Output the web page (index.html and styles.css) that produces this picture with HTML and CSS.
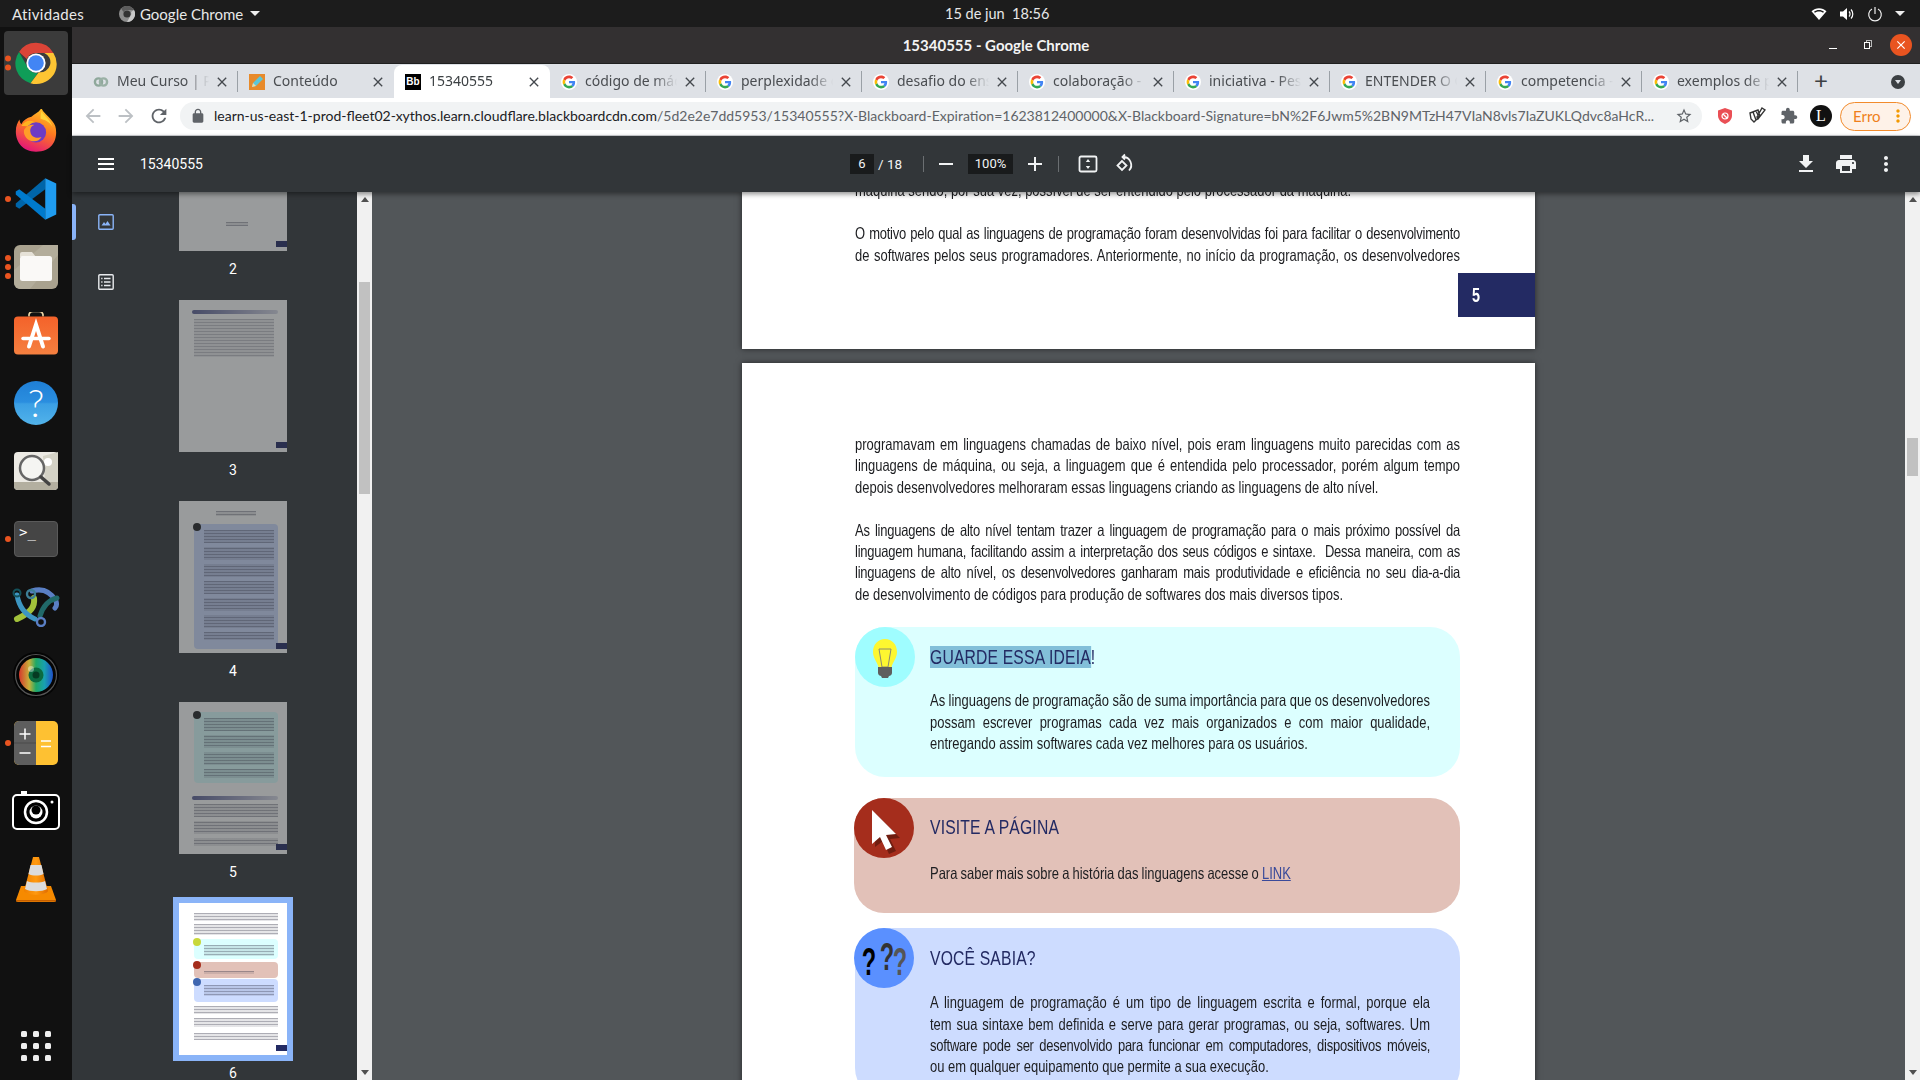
FILE: index.html
```html
<!DOCTYPE html>
<html lang="pt-BR">
<head>
<meta charset="utf-8">
<title>15340555 - Google Chrome</title>
<link rel="stylesheet" href="styles.css">
</head>
<body>
<svg class="defs" aria-hidden="true">
  <symbol id="g" viewBox="-6 -6 60 60"><circle cx="24" cy="24" r="30" fill="#fff"/><path fill="#EA4335" d="M24 9.5c3.54 0 6.71 1.22 9.21 3.6l6.85-6.85C35.9 2.38 30.47 0 24 0 14.62 0 6.51 5.38 2.56 13.22l7.98 6.19C12.43 13.72 17.74 9.5 24 9.5z"/><path fill="#4285F4" d="M46.98 24.55c0-1.57-.15-3.09-.38-4.55H24v9.02h12.94c-.58 2.96-2.26 5.48-4.78 7.18l7.73 6c4.51-4.18 7.09-10.36 7.09-17.65z"/><path fill="#FBBC05" d="M10.53 28.59c-.48-1.45-.76-2.99-.76-4.59s.27-3.14.76-4.59l-7.98-6.19C.92 16.46 0 20.12 0 24c0 3.88.92 7.54 2.56 10.78l7.97-6.19z"/><path fill="#34A853" d="M24 48c6.48 0 11.93-2.13 15.89-5.81l-7.73-6c-2.15 1.45-4.92 2.3-8.16 2.3-6.26 0-11.57-4.22-13.47-9.91l-7.98 6.19C6.51 42.62 14.62 48 24 48z"/></symbol>
  <symbol id="x" viewBox="0 0 24 24"><path fill="currentColor" d="M19 6.41L17.59 5 12 10.59 6.41 5 5 6.41 10.59 12 5 17.59 6.41 19 12 13.41 17.59 19 19 17.59 13.41 12z"/></symbol>
  <symbol id="back" viewBox="0 0 24 24"><path fill="currentColor" d="M20 11H7.83l5.59-5.59L12 4l-8 8 8 8 1.41-1.41L7.83 13H20v-2z"/></symbol>
  <symbol id="fwd" viewBox="0 0 24 24"><path fill="currentColor" d="M12 4l-1.41 1.41L16.17 11H4v2h12.17l-5.58 5.59L12 20l8-8z"/></symbol>
  <symbol id="reload" viewBox="0 0 24 24"><path fill="currentColor" d="M17.65 6.35C16.2 4.9 14.21 4 12 4c-4.42 0-7.99 3.58-7.99 8s3.57 8 7.99 8c3.73 0 6.84-2.55 7.73-6h-2.08c-.82 2.33-3.04 4-5.65 4-3.31 0-6-2.69-6-6s2.69-6 6-6c1.66 0 3.14.69 4.22 1.78L13 11h7V4l-2.35 2.35z"/></symbol>
  <symbol id="vdots" viewBox="0 0 24 24"><path fill="currentColor" d="M12 8c1.1 0 2-.9 2-2s-.9-2-2-2-2 .9-2 2 .9 2 2 2zm0 2c-1.1 0-2 .9-2 2s.9 2 2 2 2-.9 2-2-.9-2-2-2zm0 6c-1.1 0-2 .9-2 2s.9 2 2 2 2-.9 2-2-.9-2-2-2z"/></symbol>
</svg>

<header class="topbar">
  <div class="top-left">
    <span class="top-act">Atividades</span>
    <svg class="top-chrome" viewBox="0 0 16 16"><circle cx="8" cy="8" r="8" fill="#8d8d8d"/><circle cx="8" cy="8" r="3.6" fill="#333"/><path d="M8 0a8 8 0 0 1 7 4H8a4 4 0 0 0-3.5 2L2 2.5A8 8 0 0 1 8 0z" fill="#5c5c5c"/><path d="M15 4a8 8 0 0 1-7 12l3.4-6A4 4 0 0 0 12 6z" fill="#c9c9c9"/></svg>
    <span class="top-app">Google Chrome</span>
    <span class="caret"></span>
  </div>
  <div class="top-clock">15 de jun&nbsp; 18:56</div>
  <div class="top-right">
    <svg class="ti" viewBox="0 0 16 16"><path fill="#fff" d="M8 14 .5 5.2C2.6 3.3 5.2 2.2 8 2.2s5.4 1.1 7.5 3z"/><path fill="#1c1c1c" d="M3 5.7C4.4 4.7 6.1 4.1 8 4.1s3.6.6 5 1.6l-.9 1C10.900 5.900 9.500 5.400 8 5.400s-2.900.5-4.100 1.300z"/></svg>
    <svg class="ti" viewBox="0 0 16 16"><path fill="#fff" d="M1 5.500h3L8 2v12l-4-3.500H1z"/><path fill="none" stroke="#fff" stroke-width="1.200" d="M10 5.500a3.500 3.500 0 0 1 0 5M12 3.500a6.500 6.500 0 0 1 0 9"/></svg>
    <svg class="ti" viewBox="0 0 16 16"><path fill="none" stroke="#eee" stroke-width="1.200" d="M5 3a6.300 6.300 0 1 0 6 0M8 1v7"/></svg>
    <span class="caret"></span>
  </div>
</header>

<div class="desk">
  <aside class="dock">
    <div class="dock-item active">
      <span class="pips"><i></i><i></i></span>
      <svg class="di44" viewBox="0 0 48 48"><path fill="#db4437" d="M24 2a22 22 0 0 1 19 11H24a11 11 0 0 0-10 6.500L5.500 12A22 22 0 0 1 24 2z"/><path fill="#0f9d58" d="M5.500 12 15 29a11 11 0 0 0 11 5.800L18 46A22 22 0 0 1 5.500 12z"/><path fill="#fdc533" d="M43 13a22 22 0 0 1-25 33l9-12a11 11 0 0 0 6-21z"/><circle cx="24" cy="24" r="10.500" fill="#fff"/><circle cx="24" cy="24" r="8.500" fill="#4285f4"/></svg>
    </div>
    <div class="dock-item">
      <svg class="di44" viewBox="0 1.500 48 48"><defs><linearGradient id="ff" x1="0.700" y1="0" x2="0.300" y2="1"><stop offset="0" stop-color="#ffc928"/><stop offset=".45" stop-color="#ff7a1f"/><stop offset="1" stop-color="#e3127b"/></linearGradient></defs><path fill="url(#ff)" d="M30 0c1 6 12 12 15 20 3 10 0 28-21 28C10 48 2 38 2 26c0-6 2-10 4-13 0 2 1 4 2 5 2-4 6-7 11-8 3-3 9-5 11-10z"/><path fill="#ffb21f" d="M8 20c3-5 9-7 13-5 7 3 10 9 7 13-6-6-12-8-20-8z"/><circle cx="24" cy="27" r="11" fill="#6e3bc4"/><path fill="#ff9d28" d="M11 24c3-4 7-6 11-5-3 1-5 4-4 8 1 5 7 7 12 5-2 4-7 6-12 4-5-2-8-7-7-12z"/><path fill="#ffd43b" d="M30 4c3 5 10 10 12 17-3-6-9-8-13-9 0-3 0-5 1-8z"/></svg>
    </div>
    <div class="dock-item">
      <span class="pips"><i></i></span>
      <svg class="di44" viewBox="0 0 100 100"><polygon fill="#0065a9" points="71,3 71,28 12,72 4,67 4,60"/><polygon fill="#007acc" points="4,33 12,28 71,72 71,97 4,40"/><polygon fill="#1f9cf0" points="71,3 96,15 96,85 71,97"/></svg>
    </div>
    <div class="dock-item">
      <span class="pips"><i></i><i></i><i></i></span>
      <svg class="di46" viewBox="0 0 46 46"><rect x="1" y="1" width="44" height="44" rx="6" fill="#a9a28f"/><path d="M1 26 30 1h15v10L17 45H8a7 7 0 0 1-7-7z" fill="#b3ad9b"/><path fill="#e6e2d8" d="M7 10a2 2 0 0 1 2-2h10l4 5H7z"/><rect x="7" y="12" width="32" height="25" rx="2.500" fill="#faf9f7"/></svg>
    </div>
    <div class="dock-item">
      <svg class="di46" viewBox="0 1.500 46 46"><path d="M16 6V4a4 4 0 0 1 4-3h6a4 4 0 0 1 4 3v2" fill="none" stroke="#f1d9a8" stroke-width="1.600"/><defs><linearGradient id="sw" x1="0" y1="0" x2="0" y2="1"><stop offset="0" stop-color="#f4622a"/><stop offset="1" stop-color="#f58040"/></linearGradient></defs><rect x="1" y="6" width="44" height="38" rx="4" fill="url(#sw)"/><g stroke="#fff" stroke-linecap="round" fill="none"><path stroke-width="4" d="M16 36 23 14 30 36"/><path stroke-width="3.500" d="M10 28H36"/></g></svg>
    </div>
    <div class="dock-item">
      <svg class="di46" viewBox="0 0 46 46"><defs><linearGradient id="hp" x1="0" y1="0" x2="0" y2="1"><stop offset="0" stop-color="#1f7fd6"/><stop offset=".48" stop-color="#2a8edf"/><stop offset=".52" stop-color="#3b9fe4"/><stop offset="1" stop-color="#52b3ea"/></linearGradient></defs><circle cx="23" cy="23" r="22" fill="url(#hp)"/><text x="23" y="37" class="help-q">?</text></svg>
    </div>
    <div class="dock-item">
      <svg class="di46" viewBox="0 0 46 46"><rect x="1" y="4" width="44" height="38" rx="4" fill="#eceae4"/><path d="M1 34h44v4a4 4 0 0 1-4 4H5a4 4 0 0 1-4-4z" fill="#b3afa0"/><path d="M30 8 45 4v30H32z" fill="#d4d2c6"/><circle cx="35" cy="14" r="4" fill="#fff"/><circle cx="19" cy="20" r="12" fill="#f5f5f2" stroke="#666" stroke-width="2.500"/><path d="M28 29 36 36" stroke="#444" stroke-width="3.500" stroke-linecap="round"/></svg>
    </div>
    <div class="dock-item">
      <span class="pips"><i></i></span>
      <div class="term"><span>&gt;_</span></div>
    </div>
    <div class="dock-item">
      <svg class="di48" viewBox="0 0 48 40" fill="none" stroke-linecap="round"><path stroke="#5a7fc4" stroke-width="5" d="M20 4c10-3 18 0 24 10 1 3 1 5-1 7"/><path stroke="#216969" stroke-width="5" d="M45 11c-8 2-14 8-17 18"/><path stroke="#a2c13a" stroke-width="6" d="M22 11c1 8-2 14-17 21"/><path stroke="#3d96c2" stroke-width="5" d="M5 8c2 12 9 20 18 24"/><circle cx="5" cy="6" r="3.500" stroke="#14515a" stroke-width="2"/><circle cx="19" cy="7" r="4" stroke="#3d7f96" stroke-width="2.400"/><circle cx="29" cy="35" r="4" stroke="#5a7fc4" stroke-width="2.400"/></svg>
    </div>
    <div class="dock-item">
      <svg class="di46" viewBox="0 0 46 46"><defs><linearGradient id="ln" x1="0" y1="0" x2="1" y2="0"><stop offset="0" stop-color="#d5382c"/><stop offset=".3" stop-color="#c8b13a"/><stop offset=".5" stop-color="#1fa866"/><stop offset=".75" stop-color="#18a0b0"/><stop offset="1" stop-color="#2050c8"/></linearGradient></defs><circle cx="23" cy="23" r="23" fill="#050505"/><circle cx="23" cy="23" r="20.500" fill="none" stroke="#555" stroke-width="1.200"/><circle cx="23" cy="23" r="17" fill="url(#ln)"/><circle cx="23" cy="23" r="7.500" fill="#0b6b40"/><circle cx="23" cy="23" r="3.500" fill="#053a22"/><circle cx="18" cy="17" r="3" fill="#fff" opacity=".4"/></svg>
    </div>
    <div class="dock-item">
      <span class="pips"><i></i></span>
      <svg class="di46" viewBox="0 0 46 46"><rect x="1" y="1" width="44" height="44" rx="5" fill="#fec132"/><path d="M6 1h17v44H6a5 5 0 0 1-5-5V6a5 5 0 0 1 5-5z" fill="#5e5e5e"/><path d="M1 23h22" stroke="#4a4a4a"/><path d="M12 8.500v11M6.500 14h11M6.500 33h11M28 21h10M28 26.500h10" stroke="#fff" stroke-width="1.500"/></svg>
    </div>
    <div class="dock-item">
      <svg class="di48" viewBox="0 0 48 40"><rect x="1" y="4" width="46" height="34" rx="4" fill="#000" stroke="#fff" stroke-width="2"/><rect x="9" y="0" width="6" height="4" fill="#fff"/><circle cx="24" cy="21" r="11" fill="none" stroke="#fff" stroke-width="2.500"/><circle cx="24" cy="21" r="6.500" fill="#fff"/><circle cx="24" cy="19" r="4.500" fill="#000"/><circle cx="40" cy="11" r="1.500" fill="#fff"/></svg>
    </div>
    <div class="dock-item">
      <svg class="di46" viewBox="0 0 40 46"><defs><linearGradient id="vl" x1="0" y1="0" x2="1" y2="0"><stop offset="0" stop-color="#f08000"/><stop offset=".5" stop-color="#ff9a10"/><stop offset="1" stop-color="#e06c00"/></linearGradient></defs><path fill="#f68a00" d="M5 30h30l5 14a2 2 0 0 1-2 2H2a2 2 0 0 1-2-2z"/><path fill="#c45f00" d="M0 44h40v1.500H0z"/><path fill="url(#vl)" d="M17 1h6l9 34c-3 5-21 5-24 0z"/><path fill="#dcdcdc" d="M14.500 9h11l2 9c-4 2-11 2-15 0zM11 25c4 2 14 2 18 0l2 8c-5 3-17 3-22 0z"/></svg>
    </div>
    <div class="apps"><i></i><i></i><i></i><i></i><i></i><i></i><i></i><i></i><i></i></div>
  </aside>

  <section class="window">
    <div class="titlebar">
      <span></span>
      <strong class="win-title">15340555 - Google Chrome</strong>
      <div class="win-ctrl">
        <span class="wc"><i class="min"></i></span>
        <span class="wc"><i class="res"></i></span>
        <span class="wc"><span class="close"><svg viewBox="0 0 24 24"><use href="#x"/></svg></span></span>
      </div>
    </div>

    <div class="tabstrip">
      <div class="tab"><svg class="fav" viewBox="0 0 16 16" fill="none" stroke="#8fa89b" stroke-width="2.400"><circle cx="5.500" cy="8" r="3.600"/><circle cx="10.500" cy="8" r="3.600" stroke="#9ab0a5"/></svg><span class="tt">Meu Curso | Pe</span><svg class="tx"><use href="#x"/></svg></div>
      <div class="tab"><svg class="fav" viewBox="0 0 16 16"><rect width="16" height="16" fill="#e88a2a"/><path d="M3 13l1-4 7-7 3 3-7 7z" fill="#5cc7d8"/><path d="M3 13l1-4 3 3z" fill="#f3d9a0"/></svg><span class="tt">Conteúdo</span><svg class="tx"><use href="#x"/></svg></div>
      <div class="tab on"><span class="bb">Bb</span><span class="tt">15340555</span><svg class="tx"><use href="#x"/></svg></div>
      <div class="tab"><svg class="fav"><use href="#g"/></svg><span class="tt">código de máquina</span><svg class="tx"><use href="#x"/></svg></div>
      <div class="tab"><svg class="fav"><use href="#g"/></svg><span class="tt">perplexidade de</span><svg class="tx"><use href="#x"/></svg></div>
      <div class="tab"><svg class="fav"><use href="#g"/></svg><span class="tt">desafio do ensino</span><svg class="tx"><use href="#x"/></svg></div>
      <div class="tab"><svg class="fav"><use href="#g"/></svg><span class="tt">colaboração - P</span><svg class="tx"><use href="#x"/></svg></div>
      <div class="tab"><svg class="fav"><use href="#g"/></svg><span class="tt">iniciativa - Pesq</span><svg class="tx"><use href="#x"/></svg></div>
      <div class="tab"><svg class="fav"><use href="#g"/></svg><span class="tt">ENTENDER O QUE</span><svg class="tx"><use href="#x"/></svg></div>
      <div class="tab"><svg class="fav"><use href="#g"/></svg><span class="tt">competencia - P</span><svg class="tx"><use href="#x"/></svg></div>
      <div class="tab"><svg class="fav"><use href="#g"/></svg><span class="tt">exemplos de pr</span><svg class="tx"><use href="#x"/></svg></div>
      <span class="newtab">+</span>
      <span class="tabsearch"><i></i></span>
    </div>

    <div class="toolbar">
      <svg class="nav dim"><use href="#back"/></svg>
      <svg class="nav dim"><use href="#fwd"/></svg>
      <svg class="nav"><use href="#reload"/></svg>
      <div class="omni">
        <svg class="lock" viewBox="0 0 24 24"><path fill="#5f6368" d="M18 8h-1V6c0-2.760-2.240-5-5-5S7 3.240 7 6v2H6c-1.100 0-2 .9-2 2v10c0 1.100.9 2 2 2h12c1.100 0 2-.9 2-2V10c0-1.100-.9-2-2-2zM9 6c0-1.660 1.340-3 3-3s3 1.340 3 3v2H9V6z"/></svg>
        <span class="url"><b>learn-us-east-1-prod-fleet02-xythos.learn.cloudflare.blackboardcdn.com</b>/5d2e2e7dd5953/15340555?X-Blackboard-Expiration=1623812400000&amp;X-Blackboard-Signature=bN%2F6Jwm5%2BN9MTzH47VIaN8vls7IaZUKLQdvc8aHcR...</span>
        <svg class="star" viewBox="0 0 24 24"><path fill="#5f6368" d="M22 9.240l-7.190-.62L12 2 9.190 8.630 2 9.240l5.460 4.730L5.820 21 12 17.270 18.180 21l-1.630-7.030L22 9.240zM12 15.400l-3.760 2.270 1-4.280-3.320-2.880 4.380-.38L12 6.100l1.710 4.040 4.380.38-3.320 2.880 1 4.280L12 15.400z"/></svg>
      </div>
      <span class="ext"><svg viewBox="0 0 18 18"><path fill="#ea4f55" d="M9 1l7 2.500v5c0 4-3 7-7 8.500-4-1.500-7-4.500-7-8.500v-5z"/><circle cx="9" cy="9" r="3" fill="none" stroke="#fff" stroke-width="1.200"/><path d="M7 7l4 4" stroke="#fff" stroke-width="1.200"/></svg></span>
      <span class="ext"><svg viewBox="0 0 18 18" fill="none" stroke="#333" stroke-width="1.400"><path d="M2 6l8-3 2 6-6 6-3-3zM5 5l3 8M8 4l3 6M14 1l3 2-7 9-1-2z"/></svg></span>
      <span class="ext"><svg viewBox="0 0 24 24"><path fill="#5f6368" d="M20.500 11H19V7c0-1.100-.9-2-2-2h-4V3.500C13 2.120 11.880 1 10.500 1S8 2.120 8 3.500V5H4c-1.100 0-1.990.9-1.990 2v3.800H3.500c1.490 0 2.700 1.210 2.700 2.700s-1.210 2.700-2.700 2.700H2V20c0 1.100.9 2 2 2h3.800v-1.500c0-1.490 1.210-2.700 2.700-2.700 1.490 0 2.700 1.210 2.700 2.700V22H17c1.100 0 2-.9 2-2v-4h1.500c1.380 0 2.500-1.120 2.500-2.500S21.880 11 20.500 11z"/></svg></span>
      <span class="ext"><span class="avatar">L</span></span>
      <div class="erro"><span>Erro</span><svg viewBox="0 0 24 24"><use href="#vdots"/></svg></div>
    </div>

    <div class="pdfbar">
      <div class="pdf-left">
        <svg class="pi" viewBox="0 0 24 24"><path fill="#fff" d="M4 18h16v-2H4v2zm0-5h16v-2H4v2zm0-7v2h16V6H4z"/></svg>
        <span class="pdf-name">15340555</span>
      </div>
      <span class="pg-input">6</span>
      <span class="pg-total">/ 18</span>
      <span class="sep first"></span>
      <svg class="pi m10" viewBox="0 0 24 24"><path fill="#f1f3f4" d="M19 13H5v-2h14v2z"/></svg>
      <span class="zoom">100%</span>
      <svg class="pi m10" viewBox="0 0 24 24"><path fill="#f1f3f4" d="M19 13h-6v6h-2v-6H5v-2h6V5h2v6h6v2z"/></svg>
      <span class="sep second"></span>
      <svg class="pi fit" viewBox="0 0 24 24"><rect x="3.500" y="4.500" width="17" height="15" rx="1.500" fill="none" stroke="#f1f3f4" stroke-width="1.800"/><path fill="#f1f3f4" d="M12 7l2.200 3H9.800zM12 17l-2.200-3h4.400z"/></svg>
      <svg class="pi rot" viewBox="0 0 24 24"><path fill="none" stroke="#f1f3f4" stroke-width="1.800" d="M11 9 6.500 13.500 11 18l4.500-4.500zM12 5a8 8 0 0 1 6 13.500M14 2.500 11.500 5 14 7.500"/></svg>
      <div class="pdf-right">
        <svg class="pi" viewBox="0 0 24 24"><path fill="#f1f3f4" d="M19 9h-4V3H9v6H5l7 7 7-7zM5 18v2h14v-2H5z"/></svg>
        <svg class="pi" viewBox="0 0 24 24"><path fill="#f1f3f4" d="M19 8H5c-1.660 0-3 1.340-3 3v6h4v4h12v-4h4v-6c0-1.660-1.340-3-3-3zm-3 11H8v-5h8v5zm3-7c-.55 0-1-.45-1-1s.45-1 1-1 1 .45 1 1-.45 1-1 1zm-1-9H6v4h12V3z"/></svg>
        <svg class="pi" viewBox="0 0 24 24"><use href="#vdots"/></svg>
      </div>
    </div>

    <div class="viewer">
      <div class="rail">
        <span class="rail-btn act"><svg viewBox="0 0 16 16" fill="none" stroke="#8ab4f8" stroke-width="1.400"><rect x=".8" y=".8" width="14.400" height="14.400" rx="1"/><path fill="#8ab4f8" stroke="none" d="M3.500 11.500 6 8l1.500 2 2-3 3 4.500z"/></svg></span>
        <span class="rail-btn"><svg viewBox="0 0 16 16" fill="none" stroke="#e8eaed" stroke-width="1.400"><rect x=".8" y=".8" width="14.400" height="14.400" rx="1"/><path d="M6 4.500h6.500M6 8h6.500M6 11.500h6.500M3.200 4.500h1.300M3.200 8h1.300M3.200 11.500h1.300"/></svg></span>
      </div>
      <div class="thumbs">
        <div class="titem">
          <div class="thumb dim clip"><div class="tl c1"></div><span class="tag"></span></div>
          <span class="tnum">2</span>
        </div>
        <div class="titem">
          <div class="thumb dim">
            <div class="tbar"></div>
            <div class="tl t38"></div>
            <span class="tag"></span>
          </div>
          <span class="tnum">3</span>
        </div>
        <div class="titem">
          <div class="thumb dim">
            <div class="tl ttl"></div>
            <div class="tbox blue b125"><div class="tl t110 gaps"></div></div>
            <span class="tag"></span>
          </div>
          <span class="tnum">4</span>
        </div>
        <div class="titem">
          <div class="thumb dim">
            <div class="tbox teal b71"><div class="tl t60 gaps"></div></div>
            <div class="tbar sm"></div>
            <div class="tl t42 gaps"></div>
            <span class="tag"></span>
          </div>
          <span class="tnum">5</span>
        </div>
        <div class="titem">
          <div class="thumb cur">
            <div class="tl t8"></div>
            <div class="tl t11 mt3"></div>
            <div class="tbox cyan b20 mt4"><div class="tl t11"></div></div>
            <div class="tbox rose b16 mt3"><div class="tl t3 mt3"></div></div>
            <div class="tbox sky b23"><div class="tl t11"></div></div>
            <div class="tl t8 mt4"></div>
            <div class="tl t9 mt4"></div>
            <div class="tl t7 mt6"></div>
            <span class="tag"></span>
          </div>
          <span class="tnum">6</span>
        </div>
      </div>
      <div class="sb">
        <span class="up"></span>
        <span class="sb-thumb side"></span>
        <span class="dn"></span>
      </div>

      <main class="doc">
        <article class="page p-prev">
          <div class="nar">
            <p class="last">máquina sendo, por sua vez, possível de ser entendido pelo processador da máquina.</p>
            <p class="para">
              <span class="ln tight">O motivo pelo qual as linguagens de programação foram desenvolvidas foi para facilitar o desenvolvimento</span>
              <span class="ln">de softwares pelos seus programadores. Anteriormente, no início da programação, os desenvolvedores</span>
            </p>
          </div>
          <div class="pnum"><span>5</span></div>
        </article>

        <article class="page p-cur">
          <div class="nar">
            <p>
              <span class="ln">programavam em linguagens chamadas de baixo nível, pois eram linguagens muito parecidas com as</span>
              <span class="ln">linguagens de máquina, ou seja, a linguagem que é entendida pelo processador, porém algum tempo</span>
              <span class="last">depois desenvolvedores melhoraram essas linguagens criando as linguagens de alto nível.</span>
            </p>
            <p class="para">
              <span class="ln tight">As linguagens de alto nível tentam trazer a linguagem de programação para o mais próximo possível da</span>
              <span class="ln tight">linguagem humana, facilitando assim a interpretação dos seus códigos e sintaxe.&nbsp; Dessa maneira, com as</span>
              <span class="ln tight">linguagens de alto nível, os desenvolvedores ganharam mais produtividade e eficiência no seu dia-a-dia</span>
              <span class="last">de desenvolvimento de códigos para produção de softwares dos mais diversos tipos.</span>
            </p>
          </div>

          <section class="note n-idea">
            <span class="badge b-idea"><svg viewBox="0 0 60 60"><path fill="#fdf730" d="M30 12c-7 0-12 5.500-12 13 0 6 4 9.500 5.500 15h13c1.500-5.500 5.500-9 5.500-15 0-7.500-5-13-12-13z"/><path fill="none" stroke="#8a8a70" stroke-width="1" d="M24 22h12l-3 18h-6z"/><path fill="#5e5e5e" d="M23 40h14v6c0 2-2 3-3 3l-1 2h-6l-1-2c-1 0-3-1-3-3z"/></svg></span>
            <div class="nar">
              <h2><mark>GUARDE ESSA IDEIA</mark>!</h2>
              <p>
                <span class="ln">As linguagens de programação são de suma importância para que os desenvolvedores</span>
                <span class="ln">possam escrever programas cada vez mais organizados e com maior qualidade,</span>
                <span class="last">entregando assim softwares cada vez melhores para os usuários.</span>
              </p>
            </div>
          </section>

          <section class="note n-visit">
            <span class="badge b-visit"><svg viewBox="0 0 60 60"><path fill="#6f1d10" d="M22 16l24 24-10 1 6 12-7 3-6-13-8 6z"/><path fill="#fff" d="M18 12l24 24-10 1 6 12-6 3-6-13-8 7z"/></svg></span>
            <div class="nar">
              <h2>VISITE A PÁGINA</h2>
              <p><span class="last snug">Para saber mais sobre a história das linguagens acesse o <a href="#">LINK</a></span></p>
            </div>
          </section>

          <section class="note n-know">
            <span class="badge b-know"><svg viewBox="0 0 60 60"><text transform="translate(15 47) scale(.62 1)" class="q q1">?</text><text transform="translate(33 42) scale(.62 1)" class="q q2">?</text><text transform="translate(46 47) scale(.62 1)" class="q q3">?</text></svg></span>
            <div class="nar">
              <h2>VOCÊ SABIA?</h2>
              <p>
                <span class="ln">A linguagem de programação é um tipo de linguagem escrita e formal, porque ela</span>
                <span class="ln">tem sua sintaxe bem definida e serve para gerar programas, ou seja, softwares. Um</span>
                <span class="ln tight">software pode ser desenvolvido para funcionar em computadores, dispositivos móveis,</span>
                <span class="last">ou em qualquer equipamento que permite a sua execução.</span>
              </p>
            </div>
          </section>
        </article>
      </main>

      <div class="sb">
        <span class="up"></span>
        <span class="sb-thumb main"></span>
        <span class="dn"></span>
      </div>
    </div>
  </section>
</div>
</body>
</html>
```

FILE: styles.css
```css
* { box-sizing: border-box; }
html, body { margin: 0; height: 100%; }
body {
  width: 1920px; height: 1080px; overflow: hidden;
  display: flex; flex-direction: column;
  font-family: "Lato", "Noto Sans", sans-serif;
  background: #111;
}
.defs { position: absolute; width: 0; height: 0; }

/* GNOME top bar */
.topbar { height: 27px; flex: none; background: #1c1c1c; color: #e8e8e8; display: flex; align-items: center; font-size: 15px; }
.top-left { width: 945px; display: flex; align-items: center; flex: none; }
.top-act { margin-left: 12px; width: 107px; letter-spacing: .35px; }
.top-chrome { width: 16px; height: 16px; }
.top-app { margin-left: 5px; }
.caret { display: inline-block; width: 0; height: 0; border: 5px solid transparent; border-top: 5px solid #eee; border-bottom: 0; margin-left: 7px; }
.top-clock { flex: none; font-size: 14.500px; }
.top-right { margin-left: auto; display: flex; align-items: center; padding-right: 15px; }
.ti { width: 16px; height: 16px; margin-right: 12px; }
.top-right .caret { margin-left: 0; }

.desk { flex: 1; display: flex; min-height: 0; }

/* Dock */
.dock { width: 72px; flex: none; background: #111; display: flex; flex-direction: column; padding-top: 2px; position: relative; }
.dock-item { height: 68px; flex: none; display: flex; align-items: center; justify-content: center; position: relative; }
.dock-item.active { background: #3b3b3b; border-radius: 4px; margin: 2px 4px 0; height: 64px; margin-bottom: 2px; }
.pips { position: absolute; left: 4.500px; top: 50%; transform: translateY(-50%); display: flex; flex-direction: column; gap: 3px; }
.dock-item.active .pips { left: 0.500px; }
.pips i { width: 6px; height: 6px; border-radius: 50%; background: #e95420; display: block; }
.di44 { width: 44px; height: 44px; }
.di46 { width: 46px; height: 46px; }
.di48 { width: 48px; height: 40px; }
.help-q { font: 300 38px "Lato", sans-serif; fill: #fff; text-anchor: middle; }
.term { width: 44px; height: 36px; border-radius: 4px; background: #454545; border: 1px solid #5a5a5a; color: #fff; font: 14px/1 "DejaVu Sans Mono", monospace; padding: 3px 4px; }
.apps { margin-top: auto; margin-bottom: 19px; display: grid; grid-template-columns: repeat(3, 6px); gap: 6px; justify-content: center; }
.apps i { width: 6px; height: 6px; border-radius: 1.500px; background: #eee; }

/* Window */
.window { flex: 1; display: flex; flex-direction: column; min-width: 0; }
.titlebar { height: 36px; flex: none; background: #333031; color: #f4f4f4; display: grid; grid-template-columns: 1fr auto 1fr; align-items: center; font-size: 15px; }
.win-title { font-weight: 700; }
.win-ctrl { display: flex; justify-content: flex-end; padding-right: 2px; }
.wc { width: 34px; height: 24px; display: flex; align-items: center; justify-content: center; }
.min { width: 8px; height: 1px; background: #fff; margin-top: 6px; }
.res { width: 6px; height: 7px; border: 1px solid #fff; box-shadow: 2px -2px 0 -1px #333031, 2px -2px 0 0 #bbb; }
.close { width: 22px; height: 22px; border-radius: 50%; background: #e95420; color: #fff; display: flex; align-items: center; justify-content: center; margin-left: 0; }
.close svg { width: 14px; height: 14px; }

.tabstrip { height: 35px; flex: none; background: #dee1e6; display: flex; align-items: stretch; padding: 1px 15px 0 10px; border-top: 1px solid #1f1f1f; }
.tab { width: 156px; flex: none; display: flex; align-items: center; padding: 0 8px 0 11px; color: #4a4d51; font: 14px "Noto Sans", sans-serif; position: relative; }
.tab::after { content: ""; position: absolute; right: 0; top: 6px; bottom: 6px; width: 1px; background: #9aa0a6; }
.tab.on { background: #fff; border-radius: 8px 8px 0 0; color: #3c4043; }
.tab.on::after, .tab:nth-child(2)::after { display: none; }
.fav { width: 16px; height: 16px; flex: none; }
.bb { width: 16px; height: 16px; flex: none; background: #000; color: #fff; font: 700 10px/16px "Liberation Sans", sans-serif; text-align: center; }
.tt { margin-left: 8px; padding-bottom: 2px; flex: 1; white-space: nowrap; overflow: hidden; -webkit-mask-image: linear-gradient(90deg, #000 72%, transparent 97%); mask-image: linear-gradient(90deg, #000 72%, transparent 97%); }
.tab .tx { width: 16px; height: 16px; flex: none; color: #45494e; margin-left: 2px; }
.newtab { margin-left: 13px; width: 20px; font-size: 24px; line-height: 30px; font-weight: 400; color: #3c4043; text-align: center; }
.tabsearch { margin-left: auto; width: 14px; height: 14px; border-radius: 50%; background: #3c4043; align-self: center; display: flex; align-items: center; justify-content: center; }
.tabsearch i { width: 0; height: 0; border: 3.500px solid transparent; border-top: 4px solid #dee1e6; border-bottom: 0; }

.toolbar { height: 38px; flex: none; background: #fff; display: flex; align-items: center; padding: 0 9px 1px; gap: 0; border-bottom: 1px solid #cfd1d4; }
.nav { width: 24px; height: 24px; margin-right: 9px; color: #5f6368; transform: scale(.92); }
.nav.dim { color: #bcc0c4; }
.omni { flex: 1; min-width: 0; height: 28px; margin-right: 7px; background: #f1f3f4; border-radius: 14px; display: flex; align-items: center; padding: 0 9px 0 10px; }
.lock { width: 16px; height: 16px; flex: none; }
.url { margin-left: 8px; padding-bottom: 2px; flex: 1; min-width: 0; overflow: hidden; white-space: nowrap; font-size: 14px; color: #5f6368; letter-spacing: 0; }
.url b { font-weight: 400; color: #202124; }
.star { width: 18px; height: 18px; flex: none; margin-left: 14px; }
.ext { width: 32px; height: 28px; flex: none; display: flex; align-items: center; justify-content: center; }
.ext svg { width: 18px; height: 18px; }
.avatar { width: 22px; height: 22px; border-radius: 50%; background: #111; color: #fff; font: 16px/22px "Liberation Serif", serif; text-align: center; }
.erro { width: 71px; height: 29px; margin-left: 3px; flex: none; border: 1px solid #f28b2c; border-radius: 15px; background: #fef2e8; color: #ef7f1a; display: flex; align-items: center; justify-content: space-between; font-size: 15px; padding: 0 0 0 12px; }
.erro svg { width: 20px; height: 20px; margin-right: 2px; color: #f29900; }

.pdfbar { height: 56px; flex: none; background: #323639; color: #f1f3f4; display: flex; align-items: center; font: 13px "Roboto", sans-serif; position: relative; z-index: 2; box-shadow: 0 2px 5px rgba(0,0,0,.45); }
.pdf-left { width: 778px; flex: none; display: flex; align-items: center; padding-left: 22px; }
.pdf-name { margin-left: 22px; font-size: 14px; color: #fff; }
.pi { width: 24px; height: 24px; flex: none; color: #f1f3f4; }
.pg-input { width: 24px; height: 20px; background: #191b1c; text-align: center; line-height: 20px; }
.pg-total { margin-left: 4px; width: 24px; white-space: nowrap; font-size: 13.500px; }
.sep { width: 1px; height: 16px; background: #6b6f72; flex: none; }
.sep.first { margin-left: 21px; }
.sep.second { margin-left: 11px; }
.m10 { margin-left: 10px; }
.zoom { margin-left: 10px; width: 45px; height: 20px; background: #191b1c; text-align: center; line-height: 20px; }
.fit { margin-left: 17px; }
.rot { margin-left: 11px; }
.pdf-right { margin-left: auto; padding-right: 22px; display: flex; gap: 16px; }

.viewer { flex: 1; min-height: 0; display: flex; overflow: hidden; background: #525659; }

/* Thumbnails */
.rail { width: 68px; flex: none; background: #323639; display: flex; flex-direction: column; position: relative; padding-top: 22px; gap: 44px; }
.rail-btn { margin-left: 26px; width: 16px; height: 16px; display: block; }
.rail-btn svg { display: block; width: 16px; height: 16px; }
.rail-btn.act::before { content: ""; position: absolute; left: 0; top: 12px; width: 4px; height: 36px; border-radius: 0 3px 3px 0; background: #8ab4f8; }
.thumbs { width: 217px; flex: none; background: #323639; padding-left: 39px; overflow: hidden; }
.titem { width: 108px; display: flex; flex-direction: column; align-items: center; margin-bottom: 21px; }
.tnum { margin-top: 8px; height: 20px; font: 14px/20px "Roboto", sans-serif; color: #fff; }
.thumb { width: 108px; height: 152px; flex: none; background: #fff; padding: 10px 9px 0 15px; position: relative; overflow: hidden; }
.thumb.dim { opacity: .5; }
.thumb.cur { box-shadow: 0 0 0 6px #8ab4f8; overflow: visible; }
.thumb.clip { height: 59px; padding-top: 30px; }
.tag { position: absolute; right: 0; bottom: 4px; width: 11px; height: 6px; background: #232a63; }
.tl { background: repeating-linear-gradient(rgba(40,40,60,.38) 0 1px, rgba(40,40,60,.12) 1px 3px); }
.gaps { -webkit-mask-image: repeating-linear-gradient(#000 0 13px, transparent 13px 17px); mask-image: repeating-linear-gradient(#000 0 13px, transparent 13px 17px); }
.c1 { height: 4px; width: 22px; margin-left: 32px; }
.t3 { height: 3px; width: 50px; }
.t7 { height: 7px; }
.t8 { height: 8px; }
.t9 { height: 9px; }
.t11 { height: 11px; }
.t38 { height: 38px; margin-top: 5px; width: 80px; opacity: .75; }
.t42 { height: 42px; margin-top: 4px; }
.t60 { height: 60px; }
.t110 { height: 110px; }
.ttl { height: 5px; margin: 0 22px; }
.mt3 { margin-top: 3px; }
.mt4 { margin-top: 4px; }
.mt6 { margin-top: 6px; }
.tbar { height: 4px; margin-left: -2px; border-radius: 2px; background: linear-gradient(90deg, #5c6196, #d8d9e6); }
.tbar.sm { margin-top: 13px; }
.tbox { border-radius: 4px; padding: 6px 4px 0 10px; position: relative; }
.tbox::before { content: ""; position: absolute; left: -1px; top: -1px; width: 8px; height: 8px; border-radius: 50%; background: #222; }
.blue { background: #cddcff; margin-top: 8px; }
.teal { background: #dcffff; }
.cyan { background: #dcffff; }
.cyan::before { background: #c8d83a; }
.rose { background: #e2c1b8; }
.rose::before { background: #a52d1c; }
.sky { background: #cddcff; }
.sky::before { background: #3f66b0; }
.b125 { height: 125px; }
.b71 { height: 71px; }
.b20 { height: 20px; }
.b16 { height: 16px; }
.b23 { height: 23px; margin-top: 1px; }

/* Scrollbars */
.sb { width: 15px; flex: none; background: #f1f1f1; display: flex; flex-direction: column; align-items: center; }
.up { width: 0; height: 0; border: 4.500px solid transparent; border-bottom: 5px solid #505050; border-top: 0; margin-top: 5px; margin-bottom: 5px; }
.dn { width: 0; height: 0; border: 4.500px solid transparent; border-top: 5px solid #505050; border-bottom: 0; margin-top: auto; margin-bottom: 5px; }
.sb-thumb { width: 11px; background: #c1c1c1; display: block; }
.sb-thumb.side { margin-top: 75px; height: 212px; }
.sb-thumb.main { margin-top: 231px; height: 38px; }

/* PDF pages */
.doc { flex: 1; min-width: 0; overflow: hidden; display: flex; flex-direction: column; align-items: center; gap: 14px; }
.page { width: 793px; flex: none; background: #fff; box-shadow: 0 0 6px rgba(0,0,0,.55); color: #1c1d20; font-family: "Liberation Sans", sans-serif; font-size: 16.500px; line-height: 21.400px; padding: 0 75px 0 113px; display: flex; flex-direction: column; }
.page p { margin: 0; }
/* The PDF's face is a condensed grotesque: no such font is installed, so the text blocks are squeezed horizontally. */
.nar { flex: none; width: 127.23%; transform: scaleX(.786); transform-origin: left top; }
.ln, .last { display: block; white-space: nowrap; }
.ln { word-spacing: -1.500px; text-align: justify; text-align-last: justify; white-space: normal; }
.tight { letter-spacing: -.3px; word-spacing: -2px; }
.snug { word-spacing: -.6px; }
.page .para { margin-top: 21.300px; }
.p-prev { height: 157px; justify-content: flex-end; }
.pnum { align-self: flex-end; width: 77px; height: 44px; margin: 7px -75px 32px 0; background: #232a63; color: #fff; font-weight: 700; font-size: 20px; line-height: 44px; padding-left: 14px; flex: none; }
.pnum span { display: inline-block; transform: scaleX(.72); transform-origin: left; }
.p-cur { height: 800px; padding-top: 71px; }

.note { border-radius: 30px; padding-left: 75px; padding-right: 30px; position: relative; flex: none; }
.note h2 { margin: 0; font-size: 20px; line-height: 20px; font-weight: 400; letter-spacing: .2px; color: #232a63; }
.note a { color: #3a4a9a; text-decoration: underline; }
mark { background: #82bfd9; color: #232a63; }
.badge { position: absolute; left: 0; top: 0; width: 60px; height: 60px; border-radius: 50%; }
.badge svg { display: block; width: 60px; height: 60px; }
.n-idea { background: #dcffff; margin-top: 22px; height: 150px; padding-top: 20px; }
.n-idea h2 { margin-bottom: 23px; }
.b-idea { background: #9ffdff; }
.n-visit { background: #e2c1b8; margin-top: 21px; height: 115px; padding-top: 19px; margin-left: -1px; padding-left: 76px; }
.n-visit h2 { margin-bottom: 26px; }
.b-visit { background: #a52d1c; }
.n-know { background: #cddcff; margin-top: 15px; height: 170px; padding-top: 20px; }
.n-know h2 { margin-bottom: 24px; }
.b-know { background: #5a90ff; left: -1px; }
.q { font: 700 38px "Liberation Sans", sans-serif; text-anchor: middle; }
.q1 { fill: #000; }
.q2 { fill: #333; }
.q3 { fill: #555; }
```
